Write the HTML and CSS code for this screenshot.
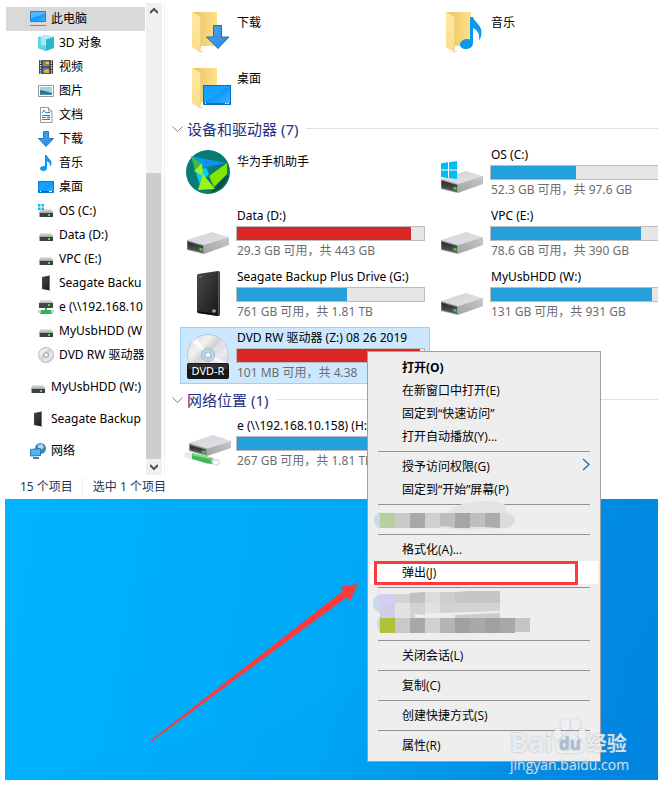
FILE: index.html
```html
<!DOCTYPE html>
<html lang="zh-CN">
<head>
<meta charset="utf-8">
<meta name="viewport" content="width=device-width, initial-scale=1">
<title>此电脑</title>
<link rel="stylesheet" href="styles.css">
</head>
<body>
<svg class="defs" aria-hidden="true">
  <defs>
    <linearGradient id="g-top" x1="0" y1="0" x2="1" y2="1"><stop offset="0" stop-color="#d2d3d6"/><stop offset="1" stop-color="#e2e3e6"/></linearGradient>
    <linearGradient id="g-side" x1="0" y1="1" x2="1" y2="0"><stop offset="0" stop-color="#a3a4a6"/><stop offset="1" stop-color="#c6c7c9"/></linearGradient>
    <linearGradient id="g-front" x1="0" y1="0" x2="0" y2="1"><stop offset="0" stop-color="#262727"/><stop offset="1" stop-color="#5d5f60"/></linearGradient>
    <linearGradient id="g-back" x1="0" y1="0" x2="1" y2="0"><stop offset="0" stop-color="#e9c35f"/><stop offset="1" stop-color="#ffe08a"/></linearGradient>
    <linearGradient id="g-flap" x1="0" y1="0" x2="0" y2="1"><stop offset="0" stop-color="#ffe9a6"/><stop offset="1" stop-color="#fbdb88"/></linearGradient>
    <linearGradient id="g-black" x1="0" y1="0" x2="1" y2="1"><stop offset="0" stop-color="#4a4a4a"/><stop offset="1" stop-color="#161616"/></linearGradient>
    <linearGradient id="g-disc" x1="0" y1="0" x2="1" y2="1"><stop offset="0" stop-color="#d3d6d8"/><stop offset=".3" stop-color="#f1f1f1"/><stop offset=".45" stop-color="#cfd3cf"/><stop offset=".65" stop-color="#ece9ef"/><stop offset="1" stop-color="#c4c8cb"/></linearGradient>
    <linearGradient id="g-screen" x1="0" y1="0" x2="1" y2="1"><stop offset="0" stop-color="#0c9cff"/><stop offset=".45" stop-color="#1aa4ff"/><stop offset=".5" stop-color="#0b98fb"/><stop offset="1" stop-color="#45b4fb"/></linearGradient>
    <linearGradient id="g-down" x1="0" y1="0" x2="1" y2="1"><stop offset="0" stop-color="#4aa5ec"/><stop offset="1" stop-color="#2b87dc"/></linearGradient>
    <linearGradient id="g-small" x1="0" y1="0" x2="0" y2="1"><stop offset="0" stop-color="#e6e7e8"/><stop offset="1" stop-color="#b3b4b6"/></linearGradient>

    <symbol id="drive" viewBox="0 0 48 48">
      <path d="M3 31L28 23l17 5.200L20 36z" fill="url(#g-top)"/>
      <path d="M20 36l25-8v8L20 45z" fill="url(#g-side)"/>
      <path d="M3 31l17 5v9L3 41z" fill="#9a9c9e"/>
      <path d="M3.500 32.500l15.500 4.500v7L3.500 40z" fill="url(#g-front)"/>
      <path d="M15.500 38.600l3 .8v2.600l-3-.8z" fill="#3fd53f"/>
    </symbol>
    <symbol id="drive-os" viewBox="0 0 48 48">
      <use href="#drive" width="48" height="48"/>
      <path d="M3 15.300l7-1v7.300H3zM11 14.200l8-1.200v8.600h-8zM3 22.500h7V30l-7-1zM11 22.500h8V31l-8-1z" fill="#00bcf2"/>
    </symbol>
    <symbol id="drive-net" viewBox="0 0 48 48">
      <path d="M3 33c-3 0-4 5 0 6l7 2v-6z" fill="#e7eae8"/>
      <path d="M28 39l6 1c3 1 2 7-1 7l-7-2z" fill="#dfe3e0"/>
      <circle cx="32" cy="43.500" r="2" fill="#fff"/>
      <path d="M8 34l21 5c-2 2-2 5 0 6l-6-.5L8 40z" fill="#42b955"/>
      <path d="M8 34l21 5v2L8 36z" fill="#7fdc8b"/>
      <path d="M5 24l24-8 18 6-24 7.500z" fill="url(#g-top)"/>
      <path d="M23 29.500L47 22v7l-24 8z" fill="url(#g-side)"/>
      <path d="M5 24l18 5.500V37L5 32z" fill="#939597"/>
      <path d="M6 26l15.500 4.500v5L6 31z" fill="url(#g-front)"/>
      <path d="M18 31.500l3 .8v2.500l-3-.8z" fill="#3fd53f"/>
    </symbol>
    <symbol id="seagate" viewBox="0 0 48 48">
      <path d="M14 4l20-3q2 0 2 2v41q0 2-2 2l-20-3q-1 0-1-2V6q0-2 1-2z" fill="url(#g-black)"/>
      <path d="M34 1.500l1.500.5v43l-1.500.5z" fill="#555"/>
      <path d="M13 41l21 3v2l-20-3z" fill="#111"/>
      <circle cx="30" cy="41" r="1.800" fill="#aaa"/>
      <path d="M15 7l3-.3" stroke="#777"/>
    </symbol>
    <symbol id="dvd" viewBox="0 0 48 48">
      <circle cx="24" cy="24" r="20.500" fill="url(#g-disc)" stroke="#c3c7ca"/>
      <path d="M24 24L8 11l5-4zM24 24l16 12 3-5z" fill="#fff" opacity=".7"/>
      <path d="M24 24L38 9l3 4z" fill="#eadcf0" opacity=".9"/>
      <circle cx="24" cy="24" r="6.500" fill="#b8d7e8" stroke="#a5b9c5"/>
      <circle cx="24" cy="24" r="3" fill="#e8f4fb" stroke="#98b1c0"/>
      <rect x="3" y="32" width="42" height="16" rx="2" fill="#161616"/>
      <path d="M4 33h40v5H4z" fill="#303030"/>
      <text class="disc-label" x="24" y="44" text-anchor="middle">DVD-R</text>
    </symbol>
    <symbol id="folder" viewBox="0 0 48 48">
      <path d="M8 3h25v34H13z" fill="url(#g-back)"/>
      <path d="M14 41l6 1-4 2z" fill="#ddd"/>
      <path d="M8 3l9 5v31l-1 4-8-5z" fill="url(#g-flap)"/>
      <path d="M16.500 8v31" stroke="#edca72" stroke-width=".7"/>
    </symbol>
    <symbol id="folder-down" viewBox="0 0 48 48">
      <use href="#folder" width="48" height="48"/>
      <path d="M29.500 16.500h8V28H45L34 39.500 22.500 28h7z" fill="url(#g-down)" stroke="#1c6fb8"/>
    </symbol>
    <symbol id="folder-desk" viewBox="0 0 48 48">
      <use href="#folder" width="48" height="48"/>
      <rect x="19.500" y="20.500" width="27" height="19" fill="url(#g-screen)" stroke="#0870c2"/>
      <path d="M20 38.500h27" stroke="#0870c2"/><path d="M21 38.500h1M41 38.500h4" stroke="#fff" stroke-dasharray="1 .5"/>
    </symbol>
    <symbol id="folder-music" viewBox="0 0 48 48">
      <use href="#folder" width="48" height="48"/>
      <path d="M32 8h3c1 5 8 7 8.500 15 0 4-1 6-2.500 9 1-6-1-11-6-13v15.500c0 3-3 5.500-7 5.500-3.500 0-6-1.700-6-4.500 0-3 3.500-5.500 7-5.500 1.300 0 2 .2 3 .6z" fill="#0a98f2"/>
    </symbol>
    <symbol id="huawei" viewBox="0 0 48 48">
      <circle cx="24" cy="24" r="22" fill="#087b72"/>
      <path d="M43 27l2 1-7 12-11 5 3-5z" fill="#06524e"/>
      <path d="M7 8l35 7-23 5z" fill="#0a93ee"/>
      <path d="M11 22l11-2 3 6-9 11z" fill="#00cffa"/>
      <path d="M43 15v11L30 39l-5-11z" fill="#83e500"/>
      <path d="M7 8l11 8-7 6z" fill="#3fba4a"/>
      <path d="M10 23l8-8 1 13z" fill="#9bf01b"/>
      <path d="M19 26l12 15-17 1z" fill="#9cf319"/>
    </symbol>

    <symbol id="s-pc" viewBox="0 0 16 16"><path d="M.5.500h15v10H.5z" fill="url(#g-screen)" stroke="#3e7ea8"/><path d="M1 1h14v2L1 7z" fill="#7fccff" opacity=".55"/><path d="M0 14.500h16" stroke="#5b8fb5"/></symbol>
    <symbol id="s-3d" viewBox="0 0 16 16"><path d="M0 2l8-2 8 2v11l-8 3-8-3z" fill="#2bb5cf"/><path d="M0 2l8-2 8 2-8 2.500z" fill="#b8eef4"/><path d="M0 2l8 2.500V16l-8-3z" fill="#62d3e2"/><path d="M3 3l5 1.500V11l-5-1z" fill="#a9e8ef"/></symbol>
    <symbol id="s-video" viewBox="0 0 16 16"><path d="M1 1h14v14H1z" fill="#333"/><path d="M2.500 1v14M13.500 1v14" stroke="#ddd" stroke-width="1.500" stroke-dasharray="1.500 1"/><path d="M4.500 1.500h7v6h-7z" fill="#5484d6"/><path d="M5 5l2-3 4 2v3H6z" fill="#b57a38"/><path d="M8 3h3v2H8z" fill="#e8cf38"/><path d="M4.500 8.500h7v6h-7z" fill="#3d78d0"/><path d="M5 12l3-2 3 1v3H7z" fill="#e7b037"/></symbol>
    <symbol id="s-pic" viewBox="0 0 16 16"><path d="M.5 2.500h15v11H.5z" fill="#fff" stroke="#999"/><path d="M2 4h12v8H2z" fill="#9cd4f5"/><path d="M2 7q5 1 12 3v2H2z" fill="#386f62"/><path d="M2 10.500h12V12H2z" fill="#4486b5"/></symbol>
    <symbol id="s-doc" viewBox="0 0 16 16"><path d="M2.500.500h8L14 4v11.500H2.500z" fill="#fff" stroke="#999"/><path d="M10.500.500V4H14" fill="#eee" stroke="#999"/><path d="M4 6l2-3 2 3M8 5.500h4M4 8.500h8M4 10.500h4M4 12.500h8" fill="none" stroke="#2c86cc"/><path d="M9 9.500h3v2H9z" fill="#5b9d7e"/></symbol>
    <symbol id="s-down" viewBox="0 0 16 16"><path d="M5.500.500h5v7h5L8 15.500.5 7.500h5z" fill="url(#g-down)" stroke="#2878c3"/></symbol>
    <symbol id="s-music" viewBox="0 0 16 16"><path d="M7 0h2c0 3 4.500 4 4.500 8 0 1.500-.5 2.500-1.500 3.500.3-3-1-4.500-3-5.300V13c0 2-1.500 3-3.500 3S2 15 2 13.500 4 11 5.500 11c.6 0 1 .1 1.500.3z" fill="#0a98f2"/></symbol>
    <symbol id="s-desk" viewBox="0 0 16 16"><path d="M.5 2.500h15v11H.5z" fill="url(#g-screen)" stroke="#0b78cf"/><path d="M1 12.500h14" stroke="#075da8"/><path d="M2 12.500h1M11 12.500h3" stroke="#fff"/></symbol>
    <symbol id="s-drive" viewBox="0 0 16 16"><path d="M3 6h10l2 3H1z" fill="url(#g-small)"/><path d="M1 9h14v5H1z" fill="#aaa"/><path d="M2 10h13v4H2z" fill="#3d4142"/><path d="M10 11h2v2h-2z" fill="#47e04a"/></symbol>
    <symbol id="s-os" viewBox="0 0 16 16"><use href="#s-drive" width="16" height="16"/><path d="M0 1h2.500v2.500H0zM3.500 1H6v2.500H3.500zM0 4.500h2.500V7H0zM3.500 4.500H6V7H3.500z" fill="#00bcf2"/></symbol>
    <symbol id="s-net" viewBox="0 0 16 16"><path d="M3 1h10l2 3H1z" fill="url(#g-small)"/><path d="M1 4h14v5H1z" fill="#444849"/><path d="M10 5h2v2h-2z" fill="#47e04a"/><path d="M7 9h2v2h5v4H2v-4h5z" fill="#2bb65b"/><path d="M0 11h3v3H0zM13 11h3v3h-3z" fill="#c6d6ca"/></symbol>
    <symbol id="s-seagate" viewBox="0 0 16 16"><path d="M4 2l8-1.500v15L4 14z" fill="url(#g-black)"/><path d="M11.500.500v15" stroke="#777"/></symbol>
    <symbol id="s-dvd" viewBox="0 0 16 16"><circle cx="8" cy="8" r="7.500" fill="url(#g-disc)" stroke="#b7babc"/><circle cx="8" cy="8" r="2.500" fill="#d6e8f0" stroke="#9aaab3"/><circle cx="8" cy="8" r="1" fill="#fff"/></symbol>
    <symbol id="s-network" viewBox="0 0 16 16"><circle cx="10.500" cy="5.500" r="5.500" fill="#3c87b8"/><path d="M8 2l4-1 2 3-3 3-3-2z" fill="#a7dcf0"/><path d="M.5 6.500l10-1v7l-10 .5z" fill="#52b7f5" stroke="#2879ae"/><path d="M3 15h6" stroke="#3d83ad" stroke-width="2"/></symbol>
  </defs>
</svg>

<div class="page">
  <div class="explorer">
    <nav class="sidebar" aria-label="导航窗格">
      <ul class="tree">
        <li><a class="node current" href="#"><svg class="sm"><use href="#s-pc"/></svg>此电脑</a>
          <ul class="children">
            <li><a class="node" href="#"><svg class="sm"><use href="#s-3d"/></svg>3D 对象</a></li>
            <li><a class="node" href="#"><svg class="sm"><use href="#s-video"/></svg>视频</a></li>
            <li><a class="node" href="#"><svg class="sm"><use href="#s-pic"/></svg>图片</a></li>
            <li><a class="node" href="#"><svg class="sm"><use href="#s-doc"/></svg>文档</a></li>
            <li><a class="node" href="#"><svg class="sm"><use href="#s-down"/></svg>下载</a></li>
            <li><a class="node" href="#"><svg class="sm"><use href="#s-music"/></svg>音乐</a></li>
            <li><a class="node" href="#"><svg class="sm"><use href="#s-desk"/></svg>桌面</a></li>
            <li><a class="node" href="#"><svg class="sm"><use href="#s-os"/></svg>OS (C:)</a></li>
            <li><a class="node" href="#"><svg class="sm"><use href="#s-drive"/></svg>Data (D:)</a></li>
            <li><a class="node" href="#"><svg class="sm"><use href="#s-drive"/></svg>VPC (E:)</a></li>
            <li><a class="node" href="#"><svg class="sm"><use href="#s-seagate"/></svg>Seagate Backu</a></li>
            <li><a class="node" href="#"><svg class="sm"><use href="#s-net"/></svg>e (\\192.168.10</a></li>
            <li><a class="node" href="#"><svg class="sm"><use href="#s-drive"/></svg>MyUsbHDD (W</a></li>
            <li><a class="node" href="#"><svg class="sm"><use href="#s-dvd"/></svg>DVD RW 驱动器</a></li>
          </ul>
        </li>
        <li><a class="node" href="#"><svg class="sm"><use href="#s-drive"/></svg>MyUsbHDD (W:)</a></li>
        <li><a class="node" href="#"><svg class="sm"><use href="#s-seagate"/></svg>Seagate Backup</a></li>
        <li><a class="node" href="#"><svg class="sm"><use href="#s-network"/></svg>网络</a></li>
      </ul>
    </nav>
    <div class="scrollbar">
      <button class="scroll-btn" type="button" aria-label="向上滚动"><svg viewBox="0 0 8 6"><path d="M0 5l4-4 4 4"/></svg></button>
      <div class="track"><div class="thumb"></div></div>
      <button class="scroll-btn" type="button" aria-label="向下滚动"><svg viewBox="0 0 8 6"><path d="M0 1l4 4 4-4"/></svg></button>
    </div>

    <main class="content">
      <ul class="tiles folders">
        <li class="tile"><svg class="lg"><use href="#folder-down"/></svg><div class="info plain"><p class="name">下载</p></div></li>
        <li class="tile"><svg class="lg"><use href="#folder-music"/></svg><div class="info plain"><p class="name">音乐</p></div></li>
        <li class="tile"><svg class="lg"><use href="#folder-desk"/></svg><div class="info plain"><p class="name">桌面</p></div></li>
      </ul>

      <h2 class="group"><svg class="chev" viewBox="0 0 11 6"><path d="M.5.500l5 5 5-5"/></svg><span>设备和驱动器 (7)</span></h2>
      <ul class="tiles">
        <li class="tile"><svg class="lg"><use href="#huawei"/></svg><div class="info plain"><p class="name">华为手机助手</p></div></li>
        <li class="tile"><svg class="lg"><use href="#drive-os"/></svg><div class="info"><p class="name">OS (C:)</p><div class="bar"><div class="fill" style="width:45.500%"></div></div><p class="free">52.3 GB 可用，共 97.6 GB</p></div></li>
        <li class="tile"><svg class="lg"><use href="#drive"/></svg><div class="info"><p class="name">Data (D:)</p><div class="bar"><div class="fill full" style="width:93%"></div></div><p class="free">29.3 GB 可用，共 443 GB</p></div></li>
        <li class="tile"><svg class="lg"><use href="#drive"/></svg><div class="info"><p class="name">VPC (E:)</p><div class="bar"><div class="fill" style="width:80%"></div></div><p class="free">78.6 GB 可用，共 390 GB</p></div></li>
        <li class="tile"><svg class="lg"><use href="#seagate"/></svg><div class="info"><p class="name">Seagate Backup Plus Drive (G:)</p><div class="bar"><div class="fill" style="width:59%"></div></div><p class="free">761 GB 可用，共 1.81 TB</p></div></li>
        <li class="tile"><svg class="lg"><use href="#drive"/></svg><div class="info"><p class="name">MyUsbHDD (W:)</p><div class="bar"><div class="fill" style="width:86%"></div></div><p class="free">131 GB 可用，共 931 GB</p></div></li>
        <li class="tile selected"><svg class="lg"><use href="#dvd"/></svg><div class="info"><p class="name">DVD RW 驱动器 (Z:) 08 26 2019</p><div class="bar"><div class="fill full" style="width:98%"></div></div><p class="free">101 MB 可用，共 4.38</p></div></li>
      </ul>

      <h2 class="group"><svg class="chev" viewBox="0 0 11 6"><path d="M.5.500l5 5 5-5"/></svg><span>网络位置 (1)</span></h2>
      <ul class="tiles">
        <li class="tile"><svg class="lg"><use href="#drive-net"/></svg><div class="info"><p class="name">e (\\192.168.10.158) (H:)</p><div class="bar"><div class="fill" style="width:86%"></div></div><p class="free">267 GB 可用，共 1.81 TB</p></div></li>
      </ul>
    </main>
  </div>

  <footer class="status"><span>15 个项目</span><span class="status-sel">选中 1 个项目</span></footer>

  <div class="desktop">
    <svg class="arrow" viewBox="0 0 210 160" aria-hidden="true"><path d="M209 1L191 4l3 4L1 158l1 1L198 14l3 4z"/></svg>
  </div>

  <div class="menu" role="menu">
    <button type="button" role="menuitem"><b>打开(O)</b></button>
    <button type="button" role="menuitem">在新窗口中打开(E)</button>
    <button type="button" role="menuitem">固定到“快速访问”</button>
    <button type="button" role="menuitem">打开自动播放(Y)...</button>
    <hr>
    <button type="button" role="menuitem">授予访问权限(G)<svg class="sub" viewBox="0 0 8 13"><path d="M1 1l6 5.500L1 12"/></svg></button>
    <button type="button" role="menuitem">固定到“开始”屏幕(P)</button>
    <hr>
    <svg class="blurred" viewBox="0 0 228 23" aria-hidden="true">
      <path d="M10 4C2 7 2 18 10 21z" fill="#c4dde9"/>
      <path d="M75 6l10-7c15-7 45-8 50-2v6c13 4 15 16-2 17l-38 2-23-2z" fill="#e3e3e3"/>
      <path d="M130 5h6c11 3 11 12 1 15h-7z" fill="#dcdcdc"/>
      <path d="M10 5h15v15H10z" fill="#b9cda3"/><path d="M25 5h15v15H25z" fill="#c9c9c9"/><path d="M40 5h15v15H40z" fill="#a8a8a8"/><path d="M55 5h15v15H55z" fill="#d0d0d0"/><path d="M70 5h15v15l-10-2-5 1z" fill="#bdbdbd"/><path d="M85 5h15v15H85z" fill="#a5a5a5"/><path d="M100 5h15v14h-15z" fill="#bfbfbf"/><path d="M115 5h15v15l-15-1z" fill="#acacac"/>
    </svg>
    <hr>
    <button type="button" role="menuitem">格式化(A)...</button>
    <button class="hot" type="button" role="menuitem">弹出(J)</button>
    <hr>
    <svg class="blurred" viewBox="0 0 228 46" aria-hidden="true">
      <path d="M10 3C0 7 1 18 10 22zM10 25c-4 5-4 12 0 16z" fill="#c4dde9"/>
      <path d="M10 3h15v9H10z" fill="#d5cff6"/><path d="M10 12h15v15H10z" fill="#cfcde9"/>
      <path d="M25 3h15v9H25z" fill="#d3d3d3"/><path d="M40 2l15-1v11H40z" fill="#c1c1c1"/><path d="M55 1h15v11H55z" fill="#dcdcdc"/><path d="M70 1h15v11H70z" fill="#cecece"/><path d="M85 1l15-1v12H85z" fill="#c6c6c6"/><path d="M100 0h30v12h-30z" fill="#c5c5c5"/>
      <path d="M25 12h15v15H25zM55 12h15v10H55z" fill="#e2e2e2"/><path d="M40 12h15v12l-10-1v4h-5zM70 12h60v8l-60 2z" fill="#d2d2d2"/><path d="M85 24l45-2v5H85z" fill="#ccc"/>
      <path d="M10 27h15v15H10z" fill="#b1c139"/><path d="M25 27h15v15H25z" fill="#c9c9c9"/><path d="M40 27h15v15H40z" fill="#a8a8a8"/><path d="M55 27h15v15H55z" fill="#d0d0d0"/><path d="M70 27h15v15H70z" fill="#b5b5b5"/><path d="M85 27h15v15H85z" fill="#a1a1a1"/><path d="M100 27h15v15h-15z" fill="#a9a9a9"/><path d="M115 27h15v15h-15z" fill="#a1a1a1"/><path d="M130 27h15v15h-15z" fill="#a8a8a8"/><path d="M145 27h15v14h-15z" fill="#c5c5c5"/>
    </svg>
    <hr>
    <button type="button" role="menuitem">关闭会话(L)</button>
    <hr>
    <button type="button" role="menuitem">复制(C)</button>
    <hr>
    <button type="button" role="menuitem">创建快捷方式(S)</button>
    <hr>
    <button type="button" role="menuitem">属性(R)</button>
  </div>

  <div class="watermark">
    <div class="brand"><span class="bai">Bai</span><svg class="paw" viewBox="0 0 36 40"><ellipse cx="5" cy="18" rx="4" ry="6"/><ellipse cx="13" cy="8" rx="5" ry="6"/><ellipse cx="24" cy="8" rx="5" ry="6"/><ellipse cx="31" cy="18" rx="4" ry="6"/><path d="M18 17c6 0 8 7 12 10 5 5 2 12-5 11H11c-7 1-10-6-5-11 4-3 6-10 12-10z"/><text x="18" y="35" text-anchor="middle">du</text></svg><span class="jy">经验</span></div>
    <p class="url">jingyan.baidu.com</p>
  </div>
</div>
</body>
</html>
```
FILE: styles.css
```css
* { box-sizing: border-box; }

body {
  margin: 0;
  background: #fff;
  color: #000;
  font: 12px/20px "Noto Sans", "Noto Sans CJK SC", sans-serif;
}

ul, p, h2 { margin: 0; padding: 0; list-style: none; }

.defs { position: absolute; width: 0; height: 0; }

.page {
  position: relative;
  display: flex;
  flex-direction: column;
  min-height: 100vh;
  padding: 3px 9px 8px 5px;
}

.explorer { display: flex; }

/* navigation pane */
.sidebar {
  flex: 0 0 141px;
  overflow: hidden;
  padding: 4px 1px 12px 1px;
}
.tree { display: flex; flex-direction: column; gap: 8px; }
.node {
  display: flex;
  align-items: center;
  gap: 5px;
  height: 24px;
  padding-left: 24px;
  overflow: hidden;
  color: inherit;
  text-decoration: none;
  white-space: nowrap;
}
.children .node { padding-left: 32px; }
.current { background: #d9d9d9; }
.sm { flex: none; width: 16px; height: 16px; }

.scrollbar {
  display: flex;
  flex-direction: column;
  flex: 0 0 16px;
  background: #f0f0f0;
}
.scroll-btn {
  display: grid;
  place-items: center;
  height: 16px;
  padding: 0;
  border: 0;
  background: none;
}
.scroll-btn svg { width: 8px; height: 6px; }
.scroll-btn path { fill: none; stroke: #505050; stroke-width: 2; }
.track { display: flex; flex: 1; align-items: flex-end; }
.thumb { width: 15px; height: 65%; background: #cdcdcd; }

/* file area */
.content {
  flex: 1;
  min-width: 0;
  margin-left: 2px;
  padding-top: 2px;
  overflow: hidden;
  border-left: 1px solid #f0f0f0;
}
.tiles {
  display: grid;
  grid-template-columns: 250px 250px;
  grid-auto-rows: 57px;
  gap: 4px;
  padding-left: 15px;
}
.folders { grid-auto-rows: 52px; }
.tile { display: flex; gap: 4px; padding: 0 5px 0 4px; }
.selected { background: #cce8ff; box-shadow: inset 0 0 0 1px #99d1ff; }
.lg { flex: none; width: 48px; height: 48px; margin-top: 4px; }
.info { flex: 1; min-width: 0; }
.plain { padding-top: 7px; }
.name, .free { padding-left: 1px; white-space: nowrap; }
.name { line-height: 21px; }
.free { color: #6d6d6d; }
.bar { height: 15px; border: 1px solid #bcbcbc; background: #e6e6e6; }
.fill { height: 100%; background: #26a0da; }
.full { background: #da2626; }
.disc-label { fill: #fff; font-size: 11px; }

.group {
  display: flex;
  align-items: center;
  gap: 4px;
  height: 31px;
  padding-left: 7px;
  color: #1e3287;
  font-size: 15px;
  font-weight: 400;
  line-height: 18px;
  white-space: nowrap;
}
.group::after { content: ""; flex: 1; height: 1px; margin-left: 4px; background: #e2e2e2; }
.chev { flex: none; width: 11px; height: 6px; }
.chev path { fill: none; stroke: #808080; }

.status {
  display: flex;
  align-items: center;
  height: 24px;
  padding-left: 15px;
  color: #1e395b;
}
.status-sel { margin-left: 9px; padding-left: 10px; border-left: 1px solid #eee; }

/* wallpaper */
.desktop {
  position: relative;
  flex: 1;
  min-height: 281px;
  overflow: hidden;
  background:
    linear-gradient(165deg, transparent 62%, rgba(0, 130, 225, .05) 64%, rgba(0, 120, 215, .12)),
    linear-gradient(100deg, #00b4ff, #00a9f8 50%, #008ae4 88%, #0086e0);
}
.arrow { position: absolute; left: 144px; top: 84px; width: 210px; height: 160px; fill: #fd3a3a; }

/* context menu */
.menu {
  position: absolute;
  left: 367px;
  top: 351px;
  width: 234px;
  padding: 4px 2px;
  border: 1px solid #a0a0a0;
  background: #eee;
  font-family: "Open Sans", "Noto Sans CJK SC", sans-serif;
}
.menu button {
  position: relative;
  display: block;
  width: 100%;
  height: 23px;
  padding: 0 0 0 32px;
  border: 0;
  background: none;
  color: #000;
  font: inherit;
  text-align: left;
  white-space: nowrap;
}
.menu hr { height: 1px; margin: 3px 8px; border: 0; background: #919191; }
.menu .hot { background: #fff; }
.hot::after {
  content: "";
  position: absolute;
  inset: 0 20px -1px 4px;
  border: 3px solid #ff3a3a;
}
.sub { position: absolute; right: 8px; top: 3px; width: 8px; height: 13px; }
.sub path { fill: none; stroke: #1f6cb8; stroke-width: 1.3; }
.blurred { display: block; width: 100%; overflow: visible; }

.watermark {
  position: absolute;
  right: 37px;
  bottom: 13px;
  width: 120px;
  color: rgba(255, 255, 255, .75);
  font-family: "Open Sans", "Noto Sans CJK SC", sans-serif;
}
.brand {
  display: flex;
  align-items: flex-end;
  height: 40px;
  font-weight: 700;
  text-shadow: 0 0 2px rgba(110, 130, 150, .6);
}
.bai { font-size: 27px; line-height: 26px; }
.jy { font-size: 20px; line-height: 22px; }
.paw { flex: none; width: 34px; height: 38px; fill: currentColor; filter: drop-shadow(0 0 1px rgba(110, 130, 150, .6)); }
.paw text { fill: #a9bfd0; font-size: 18px; }
.url { font-size: 14px; line-height: 20px; text-shadow: 0 0 2px rgba(120, 140, 160, .7); }
```
